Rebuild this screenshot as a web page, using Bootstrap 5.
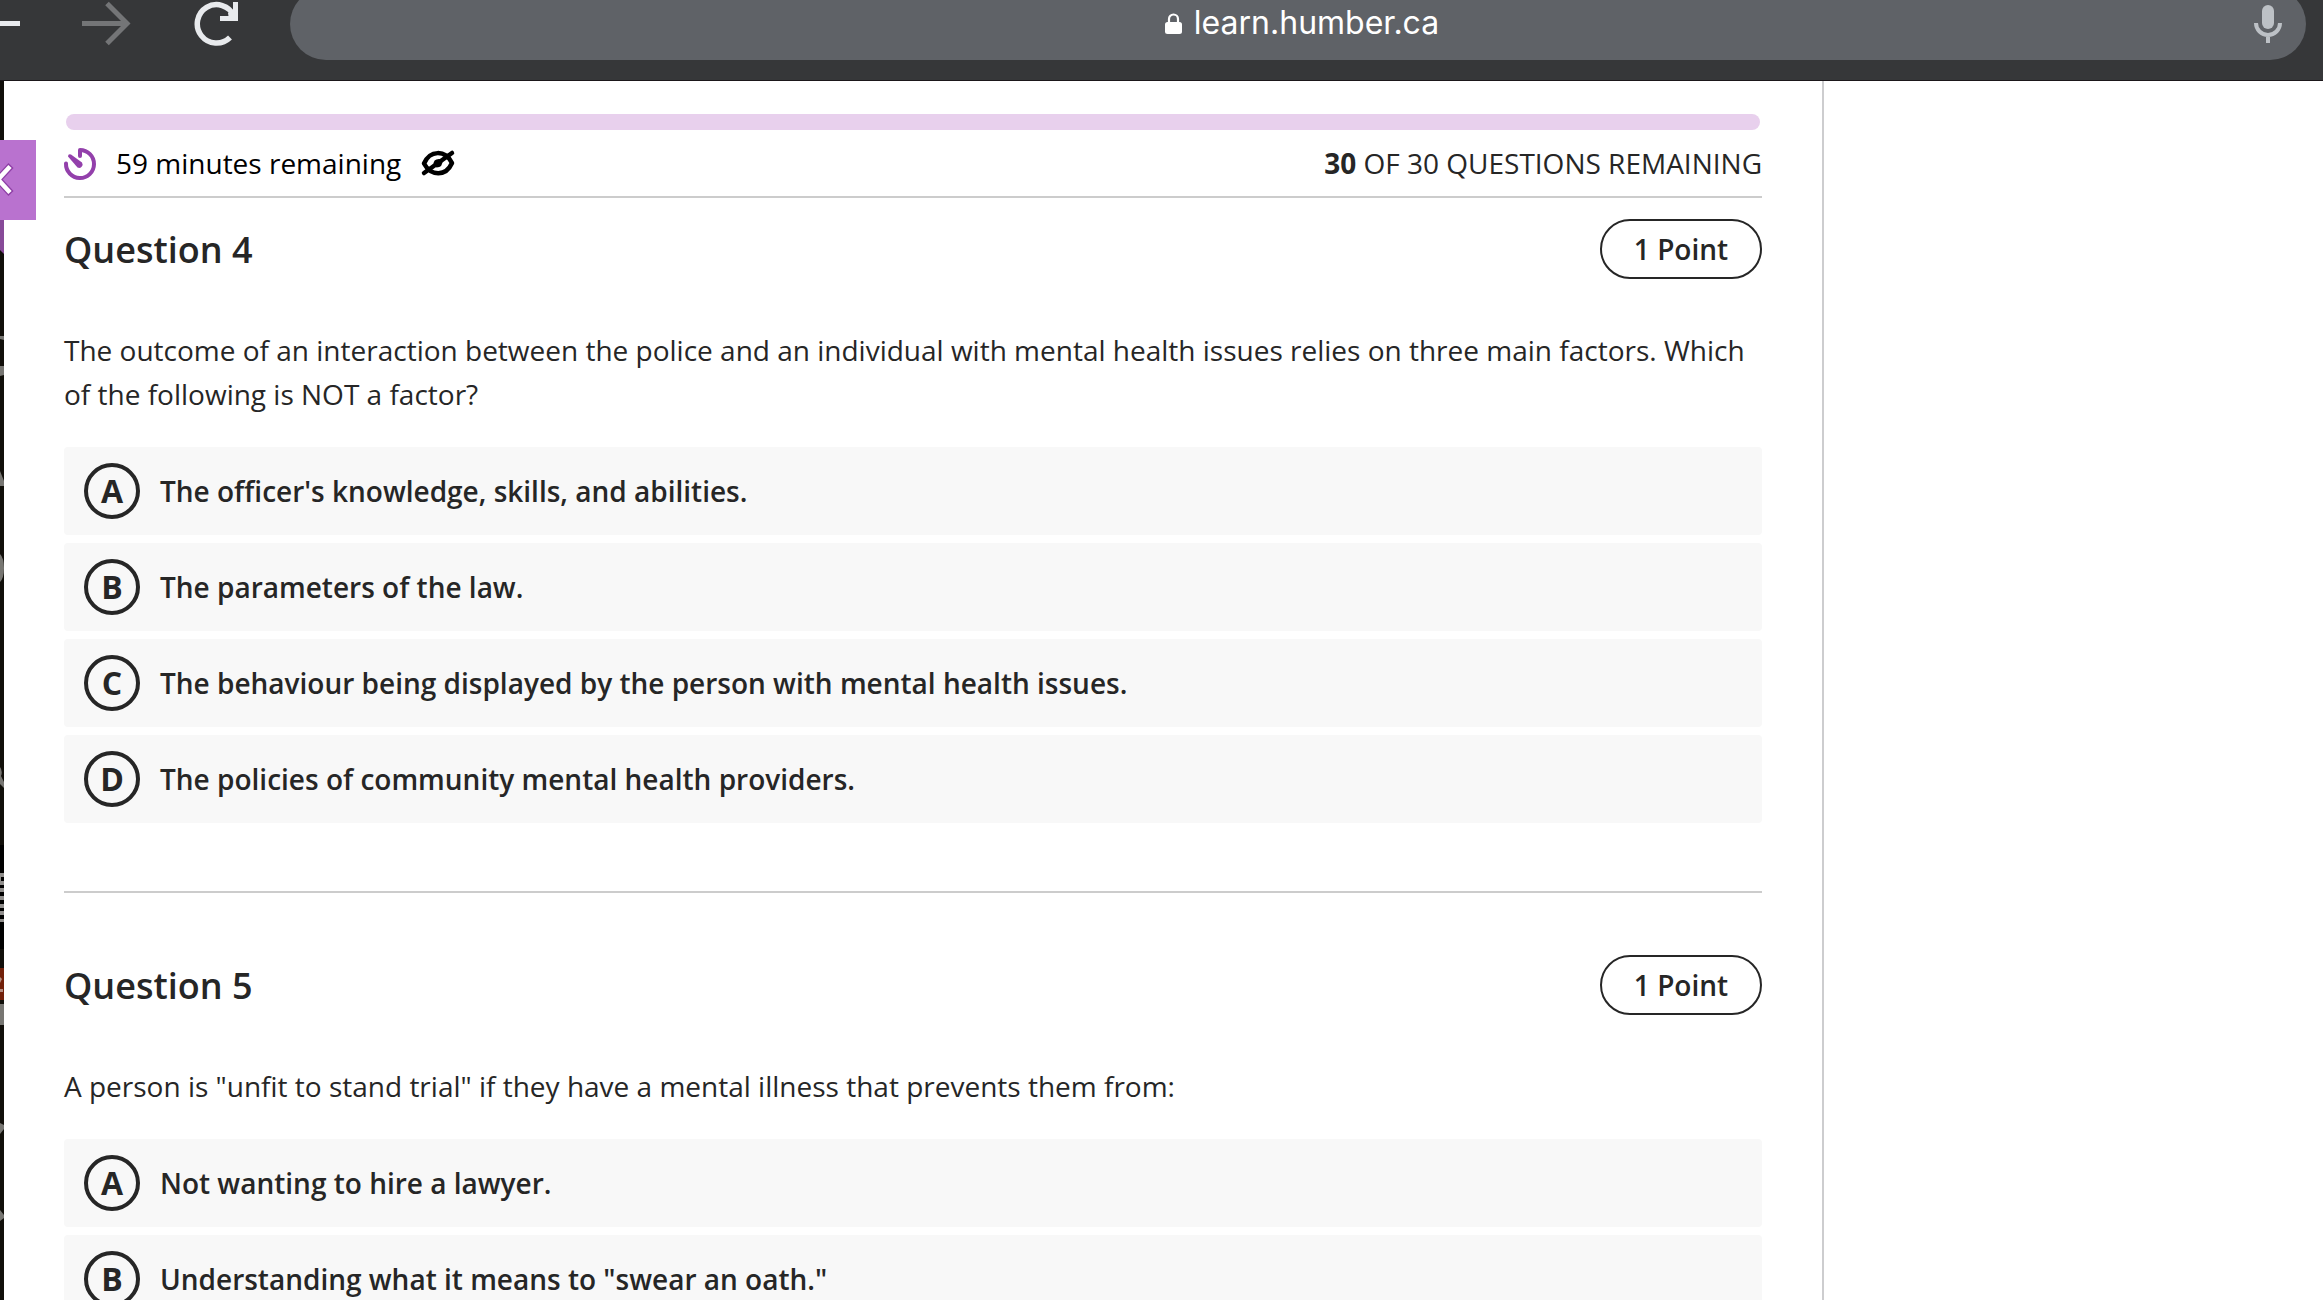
<!DOCTYPE html>
<html lang="en">
<head>
<meta charset="utf-8">
<meta name="viewport" content="width=device-width, initial-scale=1">
<title>learn.humber.ca</title>
<link rel="stylesheet" href="https://cdn.jsdelivr.net/npm/bootstrap@5.3.0/dist/css/bootstrap.min.css">
<style>
  body { font-family: "Open Sans", "Noto Sans", sans-serif; font-size: 28px; line-height: 44px; color: #262626; background: #fff; }
  .browser-bar { height: 81px; background: #363739; border-bottom: 1px solid #1b171a; }
  .bar-icons { width: 290px; height: 48px; }
  .address { height: 72px; margin-top: -12px; margin-right: 17px; padding-left: 60px; padding-right: 24px; border-radius: 36px; background: #5f6267; }
  .address-link { font-family: Inter, Roboto, sans-serif; font-size: 32px; gap: 12px; padding-bottom: 2px; }
  .icon-btn { border: 0; padding: 0; background: none; line-height: 0; color: inherit; }
  .icon-btn svg, .bar-icons svg, .address svg, .timer-icon { display: block; overflow: visible; }
  .edge-strip { width: 4px; background: #110f0a; }
  .panel-tab { left: 0; top: 59px; width: 36px; height: 80px; background: #b972cf; }
  .quiz-panel { padding: 33px 60px 0; border-right: 2px solid #cdcdcf; }
  .quiz-aside { width: 499px; }
  .time-track { height: 16px; margin: 0 2px; border-radius: 8px; background: #e8d0ed; --bs-progress-bar-bg: #9340ab; }
  .status-row { height: 68px; border-bottom: 2px solid #ccc; }
  .timer-label { margin: 0 21px 0 20px; }
  .question-head { padding-top: 21px; }
  .question-title { font-size: 36px; line-height: 62px; font-weight: 600; }
  .point-pill { width: 162px; height: 60px; border: 2px solid #262626; border-radius: 30px; font-weight: 600; line-height: 56px; }
  .question-text { margin: 47px 0 31px; }
  .answer-list { gap: 8px; }
  .answer { height: 88px; padding: 0 20px; gap: 20px; border-radius: 4px; background: #f8f8f8; font-weight: 600; cursor: pointer; }
  .answer-letter { width: 56px; height: 56px; border: 4px solid #262626; border-radius: 50%; font-size: 32px; line-height: 48px; font-weight: 700; }
  .btn-check:checked + .answer { background: #e8d0ed; }
  .question-rule { height: 2px; margin: 68px 0 41px; border: 0; background: #ccc; opacity: 1; }
</style>
<script src="https://cdn.jsdelivr.net/npm/bootstrap@5.3.0/dist/js/bootstrap.bundle.min.js" defer></script>
</head>
<body class="vh-100 d-flex flex-column overflow-hidden">

<header class="browser-bar d-flex flex-shrink-0 overflow-hidden">
  <div class="bar-icons d-flex flex-shrink-0">
    <button class="icon-btn" type="button" aria-label="Back"><svg width="82" height="48" viewBox="0 0 82 48"><path d="M-27 23.500H20M-3 4L-23 23.500L-3 43" fill="none" stroke="#e8eaed" stroke-width="5"/></svg></button>
    <button class="icon-btn" type="button" aria-label="Forward"><svg width="112" height="48" viewBox="0 0 112 48"><path d="M0 23.500H44M25 3.500L45 23.500L25 43.500" fill="none" stroke="#747577" stroke-width="5"/></svg></button>
    <button class="icon-btn" type="button" aria-label="Reload"><svg width="44" height="48" viewBox="0 0 44 48"><path d="M36 37.500A19.200 19.200 0 1 1 40 16" fill="none" stroke="#e8eaed" stroke-width="5.500"/><path d="M41.500 2V18.500H26" fill="none" stroke="#e8eaed" stroke-width="5"/><path d="M34 13L42 11V19H35Z" fill="#e8eaed"/></svg></button>
  </div>
  <div class="address flex-grow-1 d-flex align-items-center">
    <a class="address-link flex-grow-1 d-flex justify-content-center align-items-center text-white text-decoration-none" href="#">
      <svg width="17" height="21" viewBox="0 0 17 21" aria-hidden="true"><rect x="0" y="9" width="17" height="12" rx="2.500" fill="#fff"/><path d="M4 10V6a4.500 4.500 0 0 1 9 0V10" fill="none" stroke="#fff" stroke-width="2.200"/></svg>
      <span>learn.humber.ca</span>
    </a>
    <button class="icon-btn" type="button" aria-label="Voice search"><svg width="28" height="38" viewBox="0 0 28 38"><rect x="8" y="0" width="12" height="24" rx="6" fill="#bdc1c6"/><path d="M2 18a12 12 0 0 0 24 0M14 30V38" fill="none" stroke="#bdc1c6" stroke-width="4"/></svg></button>
  </div>
</header>

<div class="position-relative d-flex flex-grow-1 overflow-hidden">
  <div class="edge-strip flex-shrink-0" aria-hidden="true">
    <svg class="d-block" width="4" height="1219" viewBox="0 81 4 1219">
      <path d="M0 216H4V254L0 250Z" fill="#874a98"/>
      <path d="M0 336H4V340L0 339ZM0 366H4V375L0 376ZM0 471L4 481V486H0ZM0 554Q4 558 4 568Q4 578 0 582ZM0 767Q3 771 1 776L4 782V788L0 784Z" fill="#777672"/>
      <path d="M0 845H4V949H0Z" fill="#000"/>
      <path d="M0 873H4V877H1V881H4V885H0ZM0 888H4V892H0ZM0 896H4V900H0ZM0 904H4V908H0ZM0 911H4V915H0ZM0 919H4V922H0Z" fill="#908e8c"/>
      <path d="M0 968H4V1000H0Z" fill="#722009"/>
      <path d="M0 977L2 979L0 983ZM0 989H3V992H0Z" fill="#b28c80"/>
      <path d="M0 1004H4V1025H0ZM0 1123L4 1125V1129L0 1134ZM0 1210L4 1215V1218L0 1221Z" fill="#777672"/>
    </svg>
  </div>

  <main class="quiz-panel flex-grow-1 overflow-hidden">
    <div class="progress time-track" role="progressbar" aria-label="Time used" aria-valuenow="0" aria-valuemin="0" aria-valuemax="100"></div>
    <div class="status-row d-flex justify-content-between align-items-center">
      <div class="d-flex align-items-center text-black">
        <svg class="timer-icon" width="32" height="34" viewBox="0 -2 32 34" aria-hidden="true"><path d="M16 8V2A14 14 0 1 1 2 15.500" fill="none" stroke="#9340ab" stroke-width="4" stroke-linecap="round" stroke-linejoin="round"/><path d="M4 8.500Q4 5.500 7 6.500L18 14.500A3.500 3.500 0 0 1 13.500 19.500Z" fill="#9340ab"/></svg>
        <span class="timer-label">59 minutes remaining</span>
        <button class="icon-btn" type="button" aria-label="Hide time remaining"><svg width="32" height="28" viewBox="0 -2 32 28"><path d="M2 12.500C8 -1 23 -1.500 30 12C24 25.500 9 25.500 2 12.500Z" fill="#fff" stroke="#000" stroke-width="4.500" stroke-linejoin="round"/><path d="M2 22L30 2" stroke="#000" stroke-width="4.500" stroke-linecap="round"/><path d="M11.500 14Q11 8 17 8L20.500 9Q21 16.500 14.500 16.500Z" fill="#000"/></svg></button>
      </div>
      <div><b>30</b> OF 30 QUESTIONS REMAINING</div>
    </div>

    <section>
      <div class="question-head d-flex justify-content-between">
        <h2 class="question-title mb-0">Question 4</h2>
        <div class="point-pill text-center">1 Point</div>
      </div>
      <p class="question-text">The outcome of an interaction between the police and an individual with mental health issues relies on three main factors. Which of the following is NOT a factor?</p>
      <div class="answer-list d-flex flex-column" role="radiogroup" aria-label="Question 4">
        <input class="btn-check" type="radio" name="q4" id="q4a"><label class="answer d-flex align-items-center" for="q4a"><span class="answer-letter text-center">A</span>The officer's knowledge, skills, and abilities.</label>
        <input class="btn-check" type="radio" name="q4" id="q4b"><label class="answer d-flex align-items-center" for="q4b"><span class="answer-letter text-center">B</span>The parameters of the law.</label>
        <input class="btn-check" type="radio" name="q4" id="q4c"><label class="answer d-flex align-items-center" for="q4c"><span class="answer-letter text-center">C</span>The behaviour being displayed by the person with mental health issues.</label>
        <input class="btn-check" type="radio" name="q4" id="q4d"><label class="answer d-flex align-items-center" for="q4d"><span class="answer-letter text-center">D</span>The policies of community mental health providers.</label>
      </div>
    </section>

    <hr class="question-rule">

    <section>
      <div class="question-head d-flex justify-content-between">
        <h2 class="question-title mb-0">Question 5</h2>
        <div class="point-pill text-center">1 Point</div>
      </div>
      <p class="question-text">A person is "unfit to stand trial" if they have a mental illness that prevents them from:</p>
      <div class="answer-list d-flex flex-column" role="radiogroup" aria-label="Question 5">
        <input class="btn-check" type="radio" name="q5" id="q5a"><label class="answer d-flex align-items-center" for="q5a"><span class="answer-letter text-center">A</span>Not wanting to hire a lawyer.</label>
        <input class="btn-check" type="radio" name="q5" id="q5b"><label class="answer d-flex align-items-center" for="q5b"><span class="answer-letter text-center">B</span>Understanding what it means to "swear an oath."</label>
      </div>
    </section>
  </main>

  <aside class="quiz-aside flex-shrink-0"></aside>

  <button class="panel-tab icon-btn position-absolute" type="button" aria-label="Close panel"><svg width="36" height="80" viewBox="0 0 36 80"><path d="M-15 25.500L11 53.500M-15 53.500L11 25.500" fill="none" stroke="#8e3fa6" stroke-width="7"/><path d="M-14 26.500L10 52.500M-14 52.500L10 26.500" fill="none" stroke="#fff" stroke-width="4.500"/></svg></button>
</div>

</body>
</html>
